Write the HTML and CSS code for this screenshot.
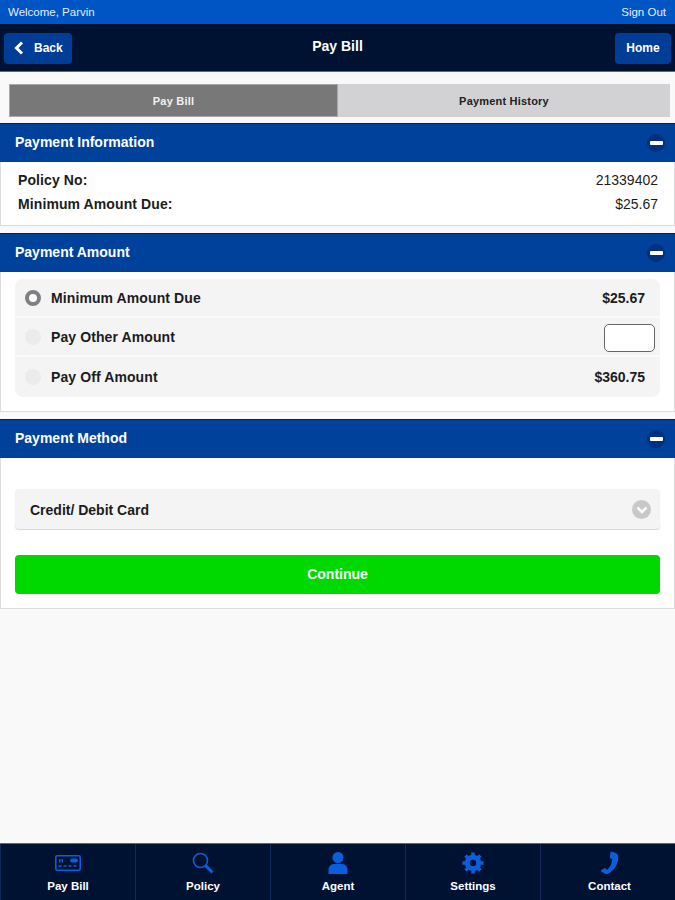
FILE: index.html
```html
<!DOCTYPE html>
<html lang="en">
<head>
    <meta charset="UTF-8">
    <title>Pay Bill</title>
    <link rel="stylesheet" href="styles.css">
</head>
<body>
    <div class="top-bar">
        <span>Welcome, Parvin</span>
        <span>Sign Out</span>
    </div>

    <header class="nav-bar">
        <a class="nav-btn nav-back">
            <svg width="10" height="14" viewBox="0 0 10 14"><path d="M8 1.5 2.500 7 8 12.500" fill="none" stroke="#fff" stroke-width="3"/></svg>
            Back
        </a>
        <h1>Pay Bill</h1>
        <a class="nav-btn nav-home">Home</a>
    </header>

    <main class="content">
        <div class="tabs">
            <div class="tab tab-active">Pay Bill</div>
            <div class="tab">Payment History</div>
        </div>

        <section class="panel">
            <div class="panel-head">
                <h2>Payment Information</h2>
                <span class="collapse"><i></i></span>
            </div>
            <div class="panel-body info">
                <div class="info-row"><strong>Policy No:</strong><span>21339402</span></div>
                <div class="info-row"><strong>Minimum Amount Due:</strong><span>$25.67</span></div>
            </div>
        </section>

        <section class="panel">
            <div class="panel-head">
                <h2>Payment Amount</h2>
                <span class="collapse"><i></i></span>
            </div>
            <div class="panel-body amount">
                <div class="options">
                    <div class="option">
                        <span class="radio radio-on"></span>
                        <span class="option-label">Minimum Amount Due</span>
                        <span class="option-value">$25.67</span>
                    </div>
                    <div class="option">
                        <span class="radio"></span>
                        <span class="option-label">Pay Other Amount</span>
                        <input class="other-input" type="text">
                    </div>
                    <div class="option">
                        <span class="radio"></span>
                        <span class="option-label">Pay Off Amount</span>
                        <span class="option-value">$360.75</span>
                    </div>
                </div>
            </div>
        </section>

        <section class="panel">
            <div class="panel-head">
                <h2>Payment Method</h2>
                <span class="collapse"><i></i></span>
            </div>
            <div class="panel-body method">
                <div class="select">
                    <span>Credit/ Debit Card</span>
                    <span class="select-arrow">
                        <svg width="12" height="10" viewBox="0 0 12 10"><path d="M1.500 2.500 6 7l4.500-4.500" fill="none" stroke="#fff" stroke-width="2.500"/></svg>
                    </span>
                </div>
                <button class="continue">Continue</button>
            </div>
        </section>
    </main>

    <footer class="tab-bar">
        <a class="tab-item">
            <span class="tab-icon">
                <svg width="26" height="16" viewBox="0 0 26 16">
                    <rect x="0.800" y="0.800" width="24.400" height="14.400" rx="1.500" fill="none" stroke="#0a60dc" stroke-width="1.600"/>
                    <rect x="4" y="4" width="1.500" height="3.500" fill="#0a60dc"/>
                    <rect x="6.500" y="4" width="1.500" height="3.500" fill="#0a60dc"/>
                    <rect x="15" y="3.500" width="8" height="4" rx="2" fill="#0a60dc"/>
                    <path d="M3.500 11h19" stroke="#0a60dc" stroke-width="1.400" stroke-dasharray="3 2"/>
                </svg>
            </span>
            <span>Pay Bill</span>
        </a>
        <a class="tab-item">
            <span class="tab-icon">
                <svg width="22" height="22" viewBox="0 0 22 22">
                    <circle cx="8.500" cy="8.500" r="7" fill="none" stroke="#0a60dc" stroke-width="1.600"/>
                    <path d="m13.500 13.500 7 7" stroke="#0a60dc" stroke-width="3"/>
                </svg>
            </span>
            <span>Policy</span>
        </a>
        <a class="tab-item">
            <span class="tab-icon">
                <svg width="20" height="22" viewBox="0 0 20 22">
                    <circle cx="10" cy="5.500" r="5.500" fill="#0a60dc"/>
                    <path d="M0.500 22v-4c0-4 3-6 5.500-6h8c2.500 0 5.500 2 5.500 6v4z" fill="#0a60dc"/>
                </svg>
            </span>
            <span>Agent</span>
        </a>
        <a class="tab-item">
            <span class="tab-icon">
                <svg width="22" height="22" viewBox="0 0 24 24">
                    <circle cx="12" cy="12" r="6.500" fill="none" stroke="#0a60dc" stroke-width="5"/>
                    <path d="M12 .5v23M.5 12h23M3.900 3.900l16.200 16.200M20.100 3.900 3.900 20.100" stroke="#0a60dc" stroke-width="3.800"/>
                    <circle cx="12" cy="12" r="3.500" fill="#001232"/>
                </svg>
            </span>
            <span>Settings</span>
        </a>
        <a class="tab-item">
            <span class="tab-icon">
                <svg width="20" height="24" viewBox="0 0 20 24">
                    <path d="M11.500 .5l4 1.500c1.700.6 2.800 2 2.800 4 0 7.500-4 13.500-10.500 16.800-1 .5-2.300.4-3-.3L1.300 20.500c-.6-.6-.5-1.100.1-1.400l2.700-1.700c.6-.3 1.100-.3 1.600.2l1.300 1.400c3-2.500 5-6.500 5.300-11l-1.700-.6c-.6-.2-.8-.7-.7-1.300L10.500 1c.1-.5.500-.7 1-.5z" fill="#0a60dc"/>
                </svg>
            </span>
            <span>Contact</span>
        </a>
    </footer>
</body>
</html>
```

FILE: styles.css
```css
* {
    margin: 0;
    padding: 0;
    box-sizing: border-box;
}

body {
    font-family: "Liberation Sans", Arial, sans-serif;
    background: #f9f9f9;
    color: #1c1c1c;
    width: 675px;
    height: 900px;
    display: flex;
    flex-direction: column;
    overflow: hidden;
}

.top-bar {
    height: 24px;
    flex: none;
    background: #0055c4;
    color: #e6eefa;
    font-size: 11.500px;
    display: flex;
    align-items: center;
    justify-content: space-between;
    padding: 0 9px 0 8px;
}

.nav-bar {
    height: 48px;
    flex: none;
    background: #001232;
    border-bottom: 1px solid #666;
    display: grid;
    grid-template-columns: 1fr auto 1fr;
    align-items: center;
    padding: 0 4px;
}

.nav-bar h1 {
    font-size: 14px;
    color: #fff;
    margin-top: -3px;
}

.nav-btn {
    height: 31px;
    margin-top: 1px;
    background: #003d96;
    border-radius: 4px;
    color: #fff;
    font-size: 12px;
    font-weight: bold;
    display: flex;
    align-items: center;
}

.nav-back {
    width: 68px;
    justify-self: start;
    padding-left: 10px;
    gap: 10px;
}

.nav-home {
    width: 56px;
    justify-self: end;
    justify-content: center;
}

.content {
    flex: 1;
    padding-top: 12px;
}

.tabs {
    display: flex;
    height: 33px;
    margin: 0 5px 6px 9px;
}

.tab {
    flex: 1;
    background: #d2d2d4;
    color: #222;
    font-size: 11px;
    font-weight: bold;
    letter-spacing: 0.2px;
    display: flex;
    align-items: center;
    justify-content: center;
}

.tab-active {
    flex: none;
    width: 329px;
    background: #787878;
    border: 1px solid #a8a8a8;
    color: #f2f2f2;
}

.panel {
    margin-bottom: 7px;
}

.panel-head {
    height: 39px;
    background: #00419b;
    border-top: 1px solid #001f66;
    color: #fff;
    display: flex;
    align-items: center;
    justify-content: space-between;
    padding: 0 10px 0 15px;
}

.panel-head h2 {
    font-size: 14px;
    font-weight: bold;
    margin-top: -2px;
}

.collapse {
    width: 18px;
    height: 18px;
    border-radius: 50%;
    background: #00307f;
    display: flex;
    align-items: center;
    justify-content: center;
}

.collapse i {
    width: 13px;
    height: 4px;
    border-radius: 1px;
    background: #fff;
}

.panel-body {
    background: #fff;
    border: 1px solid #dcdcdc;
    border-top: none;
}

.info {
    height: 64px;
    padding: 6px 16px 0 17px;
}

.info-row {
    height: 24px;
    display: flex;
    align-items: center;
    justify-content: space-between;
    font-size: 14px;
}

.info-row strong {
    letter-spacing: 0.1px;
}

.amount {
    height: 140px;
    padding: 7px 14px 0;
}

.options {
    background: #f4f4f5;
    border-radius: 8px;
    overflow: hidden;
}

.option {
    height: 39.200px;
    display: flex;
    align-items: center;
    padding: 0 5px 0 10px;
    border-bottom: 2px solid #fafafa;
}

.option:last-child {
    border-bottom: none;
}

.radio {
    width: 16px;
    height: 16px;
    border-radius: 50%;
    background: #ebebec;
    margin-right: 10px;
    flex: none;
}

.radio-on {
    background: #fff;
    border: 4px solid #808084;
}

.option-label {
    flex: 1;
    font-size: 14px;
    font-weight: bold;
    letter-spacing: 0.1px;
}

.option-value {
    font-size: 14px;
    font-weight: bold;
    padding-right: 10px;
}

.other-input {
    width: 51px;
    height: 28px;
    margin-top: 2px;
    background: #fff;
    border: 1px solid #666;
    border-radius: 5px;
}

.method {
    height: 151px;
    padding: 31px 14px 0;
}

.select {
    height: 40px;
    background: #f4f4f5;
    border-radius: 4px;
    box-shadow: 0 1px 1px #d8d8d8;
    display: flex;
    align-items: center;
    justify-content: space-between;
    padding: 1px 9px 0 15px;
    font-size: 14px;
    font-weight: bold;
}

.select-arrow {
    width: 19px;
    height: 19px;
    border-radius: 50%;
    background: #c8c8c8;
    display: flex;
    align-items: center;
    justify-content: center;
}

.continue {
    display: block;
    width: 100%;
    height: 39px;
    margin-top: 26px;
    padding-bottom: 2px;
    background: #00d900;
    border: none;
    border-radius: 4px;
    color: #fff;
    font-family: inherit;
    font-size: 14px;
    font-weight: bold;
}

.tab-bar {
    height: 57px;
    flex: none;
    background: #001232;
    border-top: 1px solid #666;
    display: flex;
}

.tab-item {
    flex: none;
    width: 135px;
    color: #fff;
    font-size: 11.500px;
    font-weight: bold;
    border-left: 1px solid #0c2a5c;
    display: flex;
    flex-direction: column;
    align-items: center;
    justify-content: flex-end;
    padding-bottom: 8px;
    gap: 5px;
}

.tab-item:last-child {
    padding-left: 3px;
}

.tab-icon {
    height: 24px;
    display: flex;
    align-items: center;
}
```
